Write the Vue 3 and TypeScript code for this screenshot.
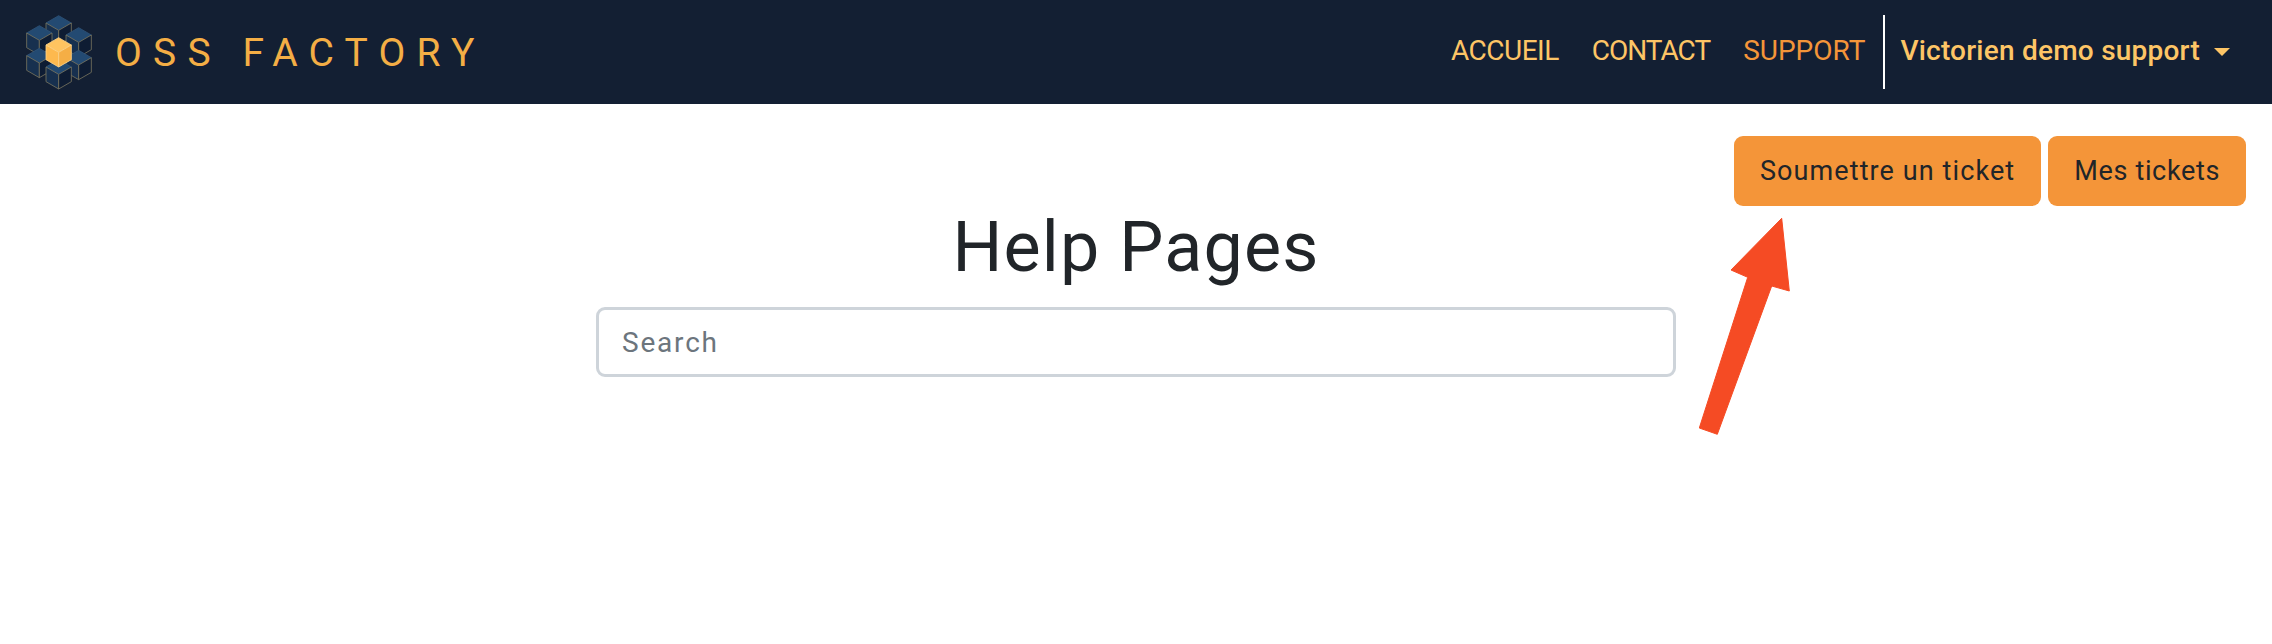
<template>
  <div class="page">
    <header class="navbar">
      <a class="brand">
        <svg class="logo" viewBox="77 40 198 225" width="66" height="75">
          <g v-for="(c, i) in cubes" :key="i" :class="{ gold: c.gold }">
            <polygon class="face-top" :points="top(c)" />
            <polygon class="face-left" :points="left(c)" />
            <polygon class="face-right" :points="right(c)" />
          </g>
        </svg>
        <span class="brand-name">OSS FACTORY</span>
      </a>
      <nav class="nav">
        <a v-for="link in links" :key="link.label" class="nav-link" :class="[link.cls]">{{ link.label }}</a>
        <div class="user">
          <span class="user-name">Victorien demo support</span>
          <i class="caret" />
        </div>
      </nav>
    </header>
    <main class="content">
      <div class="actions">
        <button class="btn submit">Soumettre un ticket</button>
        <button class="btn mine">Mes tickets</button>
      </div>
      <div class="help">
        <h1>Help Pages</h1>
        <input class="search" type="text" placeholder="Search" />
      </div>
      <svg class="arrow" viewBox="0 0 100 225" width="100" height="225">
        <polygon
          points="82.7,8.3 32,60 48.7,67.3 0.3,218 18.3,224.3 72.7,76 90.3,81"
          stroke="#f54b24"
          stroke-width="1"
          stroke-linejoin="round"
        />
      </svg>
    </main>
  </div>
</template>

<script setup lang="ts">
interface Cube {
  x: number;
  y: number;
  gold?: boolean;
}

const links = [
  { label: "ACCUEIL", cls: "home" },
  { label: "CONTACT", cls: "tight" },
  { label: "SUPPORT", cls: "active" }
];

// x, y = top vertex of each cube, painted back to front
const cubes: Cube[] = [
  { x: 175, y: 42 },
  { x: 117, y: 72 },
  { x: 235, y: 78 },
  { x: 117, y: 140 },
  { x: 235, y: 146 },
  { x: 175, y: 174 },
  { x: 175, y: 108, gold: true }
];

const HW = 38;
const HH = 22;
const SIDE = 44;

const top = ({ x, y }: Cube) => `${x},${y} ${x + HW},${y + HH} ${x},${y + 2 * HH} ${x - HW},${y + HH}`;
const left = ({ x, y }: Cube) =>
  `${x - HW},${y + HH} ${x},${y + 2 * HH} ${x},${y + 2 * HH + SIDE} ${x - HW},${y + HH + SIDE}`;
const right = ({ x, y }: Cube) =>
  `${x + HW},${y + HH} ${x},${y + 2 * HH} ${x},${y + 2 * HH + SIDE} ${x + HW},${y + HH + SIDE}`;
</script>

<style>
body {
  background: #fff;
}
</style>

<style scoped>
.page {
  width: 2272px;
  height: 644px;
  overflow: hidden;
  font-family: Roboto, "Liberation Sans", sans-serif;
  color: #212529;
}

.navbar {
  height: 104px;
  box-sizing: border-box;
  background: #131f33;
  display: flex;
  align-items: center;
  justify-content: space-between;
  padding: 0 42px 0 26px;
}

.brand {
  display: flex;
  align-items: center;
  gap: 23px;
}

.logo polygon {
  stroke-width: 2.5;
  stroke-linejoin: round;
}

.face-top {
  fill: #234a72;
  stroke: #2f5378;
}

.face-left {
  fill: #17304f;
  stroke: #77735f;
}

.face-right {
  fill: #0e1c33;
  stroke: #77735f;
}

.gold .face-top {
  fill: #ffc460;
  stroke: #ffd488;
}

.gold .face-left {
  fill: #fdb94e;
  stroke: #ffd488;
}

.gold .face-right {
  fill: #f5ae45;
  stroke: #ffd488;
}

.brand-name {
  margin-top: 2px;
  font-size: 39px;
  letter-spacing: 11.2px;
  color: #f4ae45;
  white-space: nowrap;
}

.nav {
  display: flex;
  align-items: center;
}

.nav-link {
  font-size: 28px;
  line-height: 34px;
  margin-top: -3px;
  color: #fdc566;
  margin-right: 33px;
  white-space: nowrap;
}

.nav-link.home {
  letter-spacing: -0.5px;
}

.nav-link.tight {
  letter-spacing: -1px;
}

.nav-link.active {
  color: #f49539;
  margin-right: 18px;
}

.user {
  height: 74px;
  border-left: 2px solid #fff;
  padding-left: 15px;
  display: flex;
  align-items: center;
  gap: 14px;
  font-size: 28px;
  font-weight: 500;
  color: #fdc566;
  white-space: nowrap;
}

.user-name {
  letter-spacing: 0.23px;
  margin-top: -3px;
}

.caret {
  width: 0;
  height: 0;
  border-top: 8px solid #fdc566;
  border-left: 8px solid transparent;
  border-right: 8px solid transparent;
}

.content {
  position: relative;
  padding: 32px 26px 0;
}

.actions {
  display: flex;
  justify-content: flex-end;
  gap: 7px;
}

.btn {
  height: 70px;
  padding: 0 26px;
  border: 0;
  border-radius: 9px;
  background: #f49539;
  color: #212529;
  font-family: inherit;
  font-size: 27px;
}

.btn.submit {
  letter-spacing: 1.1px;
}

.btn.mine {
  letter-spacing: 0.65px;
}

.help {
  width: 1080px;
  margin: 0 auto;
  display: flex;
  flex-direction: column;
  align-items: center;
}

h1 {
  margin: 0;
  height: 101px;
  font-size: 70px;
  line-height: 82px;
  font-weight: 400;
  letter-spacing: 1.2px;
}

.search {
  width: 100%;
  height: 70px;
  box-sizing: border-box;
  padding: 0 23px;
  border: 3px solid #ced4da;
  border-radius: 9px;
  outline: none;
  font-family: inherit;
  font-size: 28px;
  letter-spacing: 1.8px;
  color: #212529;
}

.search::placeholder {
  color: #6c757d;
}

.arrow {
  position: absolute;
  left: 1699px;
  top: 106px;
  fill: #f54b24;
}
</style>
